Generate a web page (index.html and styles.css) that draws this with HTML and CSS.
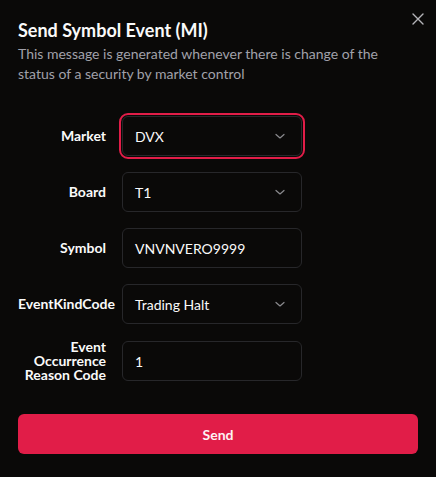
FILE: index.html
```html
<!DOCTYPE html>
<html lang="en">
<head>
  <meta charset="UTF-8">
  <meta name="viewport" content="width=device-width, initial-scale=1.0">
  <title>Send Symbol Event (MI)</title>
  <link rel="stylesheet" href="styles.css">
</head>
<body>
  <div class="dialog">
    <button class="close" type="button" aria-label="Close">
      <svg width="12" height="12" viewBox="0 0 12 12" fill="none" stroke="currentColor" stroke-width="1.4" stroke-linecap="round">
        <path d="M1 1L11 11M11 1L1 11"/>
      </svg>
    </button>
    <h2 class="title">Send Symbol Event (MI)</h2>
    <p class="desc">This message is generated whenever there is change of the status of a security by market control</p>

    <form class="form">
      <div class="row">
        <label class="label">Market</label>
        <div class="field select focused"><span>DVX</span>
          <svg class="chevron" width="12" height="8" viewBox="0 0 12 8" fill="none" stroke="currentColor" stroke-width="1.2" stroke-linecap="round" stroke-linejoin="round"><path d="M2 2.5L6 6L10 2.5"/></svg>
        </div>
      </div>
      <div class="row">
        <label class="label">Board</label>
        <div class="field select"><span>T1</span>
          <svg class="chevron" width="12" height="8" viewBox="0 0 12 8" fill="none" stroke="currentColor" stroke-width="1.2" stroke-linecap="round" stroke-linejoin="round"><path d="M2 2.5L6 6L10 2.5"/></svg>
        </div>
      </div>
      <div class="row">
        <label class="label">Symbol</label>
        <div class="field"><span>VNVNVERO9999</span></div>
      </div>
      <div class="row">
        <label class="label">EventKindCode</label>
        <div class="field select"><span>Trading Halt</span>
          <svg class="chevron" width="12" height="8" viewBox="0 0 12 8" fill="none" stroke="currentColor" stroke-width="1.2" stroke-linecap="round" stroke-linejoin="round"><path d="M2 2.5L6 6L10 2.5"/></svg>
        </div>
      </div>
      <div class="row">
        <label class="label">Event Occurrence Reason Code</label>
        <div class="field"><span>1</span></div>
      </div>

      <button class="send" type="button">Send</button>
    </form>
  </div>
</body>
</html>
```

FILE: styles.css
```css
body {
  margin: 0;
  background-color: #0a0908;
  color: #fafafa;
  font-family: Lato, "Liberation Sans", sans-serif;
}
.dialog {
  position: relative;
  padding: 16px 18px 24px;
}
.close {
  position: absolute;
  top: 13px;
  right: 12px;
  padding: 0;
  border: none;
  background: none;
  color: #b4b4b8;
  cursor: pointer;
}
.title {
  margin: 0;
  font-size: 18px;
  font-weight: 700;
  line-height: 28px;
}
.desc {
  margin: 0;
  font-size: 14px;
  line-height: 20px;
  color: #a1a1aa;
}
.form {
  display: flex;
  flex-direction: column;
  gap: 16px;
  margin-top: 32px;
}
.row {
  display: flex;
  align-items: center;
  gap: 16px;
}
.label {
  width: 88px;
  flex-shrink: 0;
  text-align: right;
  font-size: 14px;
  font-weight: 700;
  line-height: 14px;
}
.field {
  width: 180px;
  height: 40px;
  box-sizing: border-box;
  display: flex;
  align-items: center;
  justify-content: space-between;
  padding: 0 15px 0 12px;
  border: 1px solid #27272a;
  border-radius: 6px;
  font-size: 14px;
}
.focused {
  outline: 2px solid #e11d48;
  outline-offset: 1px;
}
.chevron {
  color: #8a8a8e;
}
.send {
  margin-top: 16px;
  height: 40px;
  border: none;
  border-radius: 6px;
  background-color: #e11d48;
  color: #fdf2f4;
  font-family: inherit;
  font-size: 14px;
  font-weight: 700;
  cursor: pointer;
}
```
